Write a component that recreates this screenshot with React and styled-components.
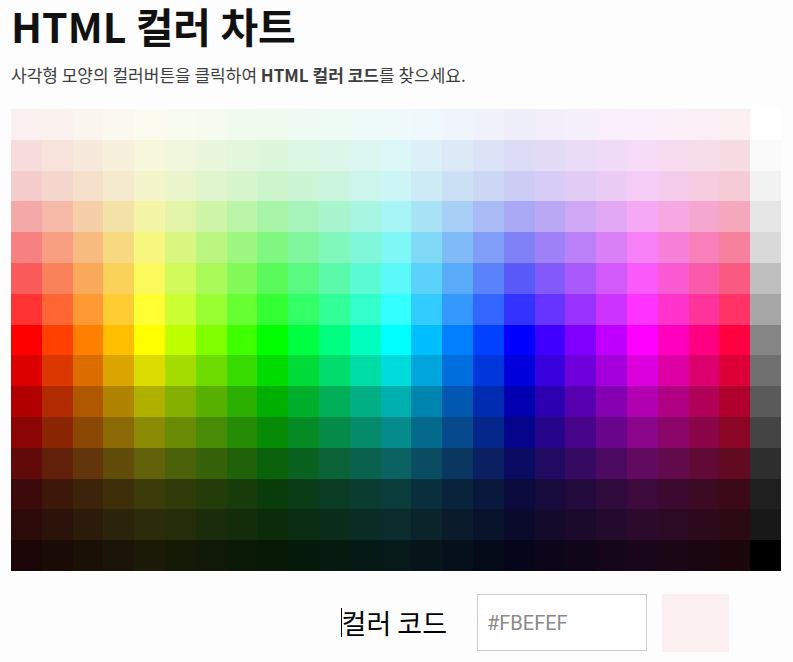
import React from "react";
import styled, { createGlobalStyle } from "styled-components";

const GlobalStyle = createGlobalStyle`
  html, body {
    margin: 0;
    padding: 0;
    background: #fdfdfd;
  }
  body {
    font-family: "Noto Sans CJK KR", "Liberation Sans", sans-serif;
    color: #111;
  }
`;

const Page = styled.div`
  padding: 0 12px 0 11px;
  display: flex;
  flex-direction: column;
`;

const Title = styled.h1`
  margin: 0;
  font-size: 41px;
  line-height: 50px;
  font-weight: 700;
  color: #111;
`;

const Subtitle = styled.p`
  margin: 13px 0 0;
  font-size: 17px;
  line-height: 24px;
  color: #3d3d3d;

  b {
    font-weight: 700;
  }
`;

const Chart = styled.div`
  margin-top: 22px;
  width: 770px;
  display: grid;
  grid-template-columns: repeat(25, 1fr);
  grid-auto-rows: 30.8px;
`;

const Cell = styled.div`
  background: ${(p) => p.$color};
  cursor: pointer;
`;

const Controls = styled.div`
  margin-top: 23px;
  display: flex;
  align-items: center;
  justify-content: flex-end;
  padding-right: 52px;
`;

const Label = styled.span`
  font-size: 27px;
  line-height: 29px;
  color: #000;
  border-left: 1px solid #000;
  margin-right: 30px;
`;

const CodeInput = styled.input`
  box-sizing: border-box;
  width: 170px;
  height: 57px;
  border: 1px solid #cccccc;
  background: #fff;
  padding: 0 9px;
  font-family: Roboto, "Liberation Sans", sans-serif;
  font-size: 20px;
  color: #888;
  outline: none;
  margin-right: 15px;

  &::placeholder {
    color: #8a8a8a;
  }
`;

const Swatch = styled.div`
  width: 67px;
  height: 58px;
  background: ${(p) => p.$color};
`;

const rows = [
  [60, 96.1],
  [63, 91.6],
  [67, 88.0],
  [79, 81.0],
  [88, 73.5],
  [94, 66.7],
  [100, 60],
  [100, 50],
  [100, 43.1],
  [100, 34.5],
  [93, 28.2],
  [81, 21.2],
  [71, 13.7],
  [63, 10.6],
  [62, 6.3],
];

const grays = [
  "#ffffff",
  "#fafafa",
  "#f2f2f2",
  "#e6e6e6",
  "#d9d9d9",
  "#bfbfbf",
  "#a6a6a6",
  "#858585",
  "#707070",
  "#5a5a5a",
  "#444444",
  "#2e2e2e",
  "#1f1f1f",
  "#171717",
  "#000000",
];

const cells = [];
rows.forEach(([s, l], r) => {
  for (let c = 0; c < 24; c++) {
    cells.push(`hsl(${c * 15}, ${s}%, ${l}%)`);
  }
  cells.push(grays[r]);
});

export default function App() {
  return (
    <>
      <GlobalStyle />
      <Page>
        <Title>HTML 컬러 차트</Title>
        <Subtitle>
          사각형 모양의 컬러버튼을 클릭하여 <b>HTML 컬러 코드</b>를 찾으세요.
        </Subtitle>
        <Chart>
          {cells.map((col, i) => (
            <Cell key={i} $color={col} />
          ))}
        </Chart>
        <Controls>
          <Label>컬러 코드</Label>
          <CodeInput placeholder="#FBEFEF" readOnly />
          <Swatch $color="#FBEFEF" />
        </Controls>
      </Page>
    </>
  );
}
